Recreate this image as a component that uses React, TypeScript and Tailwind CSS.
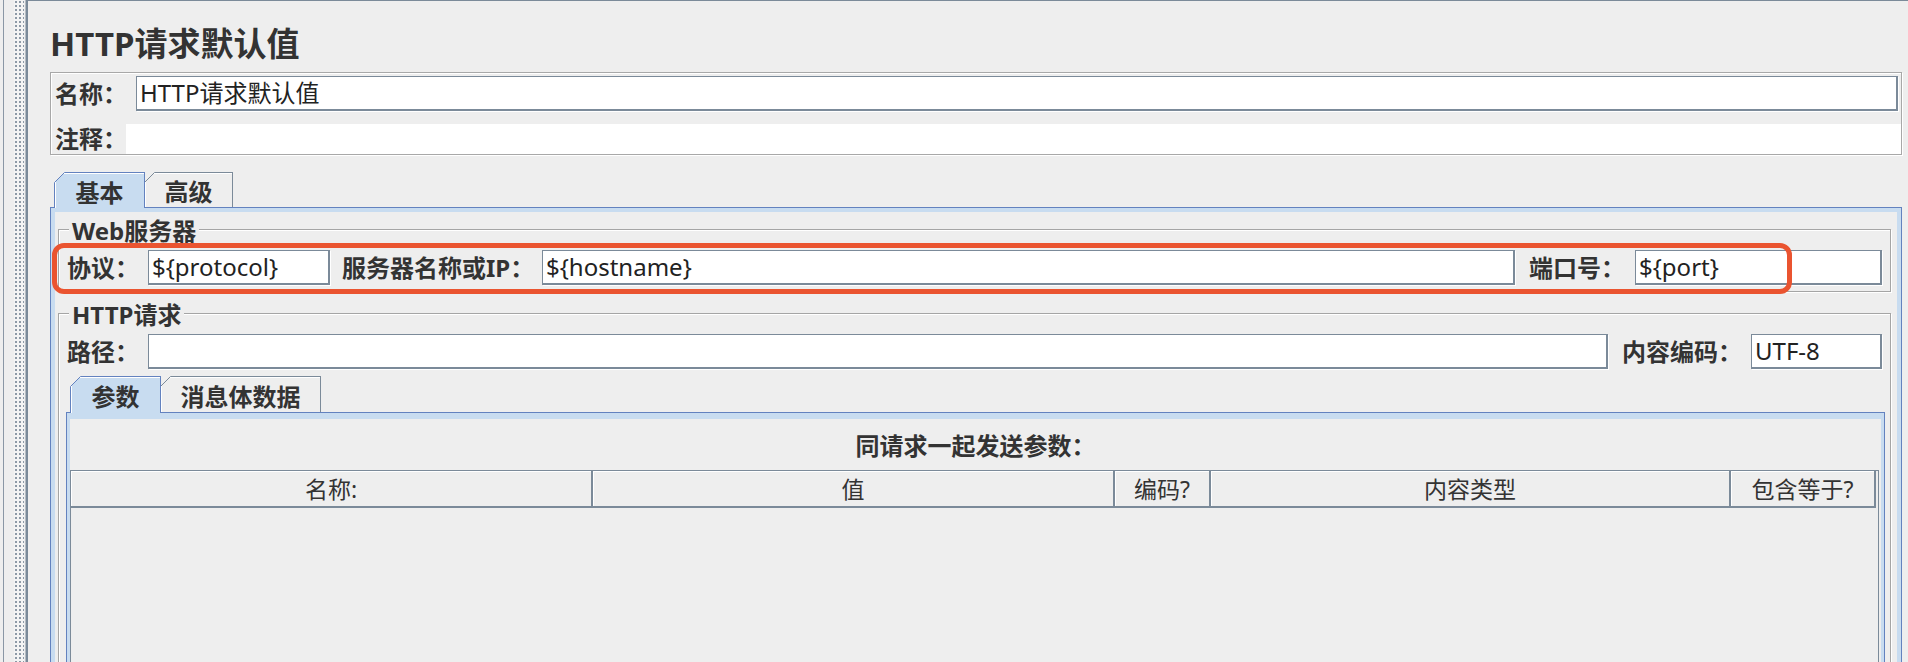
import type { ReactNode } from 'react';

const font = "font-['Noto_Sans','Noto_Sans_CJK_SC',sans-serif]";

function Label({ children, className = '' }: { children: ReactNode; className?: string }) {
  return (
    <span
      className={`shrink-0 text-[24px] leading-none font-bold whitespace-nowrap text-[#333333] ${className}`}
    >
      {children}
    </span>
  );
}

function Field({ value = '', className = '' }: { value?: string; className?: string }) {
  return (
    <div
      className={`flex h-[35px] items-center overflow-hidden border-t border-r-2 border-b-2 border-l border-[#7b8a99] bg-white pl-[3px] text-[24px] leading-none whitespace-nowrap text-[#222222] shadow-[1px_1px_0_#ffffff] ${className}`}
    >
      {value}
    </div>
  );
}

function Tab({
  label,
  selected = false,
  className = '',
}: {
  label: string;
  selected?: boolean;
  className?: string;
}) {
  const stroke = selected ? '#6382bf' : '#7b8a99';
  return (
    <div
      className={`relative flex items-center justify-center border-t border-r border-l pt-[4px] text-[24px] leading-none font-bold whitespace-nowrap text-[#333333] ${
        selected
          ? 'z-10 border-[#6382bf] bg-[#c8dcf0] shadow-[inset_1px_1px_0_#ffffff]'
          : '-ml-px self-start border-[#7b8a99] bg-[#eeeeee] shadow-[inset_1px_1px_0_#ffffff]'
      } ${className}`}
    >
      {/* chamfered top-left corner */}
      <svg className="absolute -top-px -left-px" width="11" height="11">
        <polygon points="0,0 11,0 0,11" fill="#eeeeee" />
        <line x1="0.5" y1="10.5" x2="10.5" y2="0.5" stroke={stroke} strokeWidth="1" />
      </svg>
      {label}
    </div>
  );
}

function Group({
  title,
  className = '',
  children,
}: {
  title: string;
  className?: string;
  children: ReactNode;
}) {
  return (
    <div
      className={`relative border border-[#a5a5a5] shadow-[inset_1px_1px_0_#ffffff,1px_1px_0_#ffffff] ${className}`}
    >
      <span className="absolute -top-[13px] left-[10px] bg-[#eeeeee] px-[3px] text-[24px] leading-[28px] font-bold whitespace-nowrap text-[#333333]">
        {title}
      </span>
      {children}
    </div>
  );
}

const headers = ['名称:', '值', '编码?', '内容类型', '包含等于?'];

export default function App() {
  return (
    <div className={`flex h-[662px] w-[1908px] overflow-hidden bg-[#eeeeee] ${font}`}>
      {/* splitter strip */}
      <div className="flex h-full w-[28px] shrink-0 border-r-2 border-[#7b8a99]">
        <div className="ml-[3px] h-full w-px bg-[#8a97a5]" />
        <div className="ml-[10px] h-full w-[10px] bg-[#f4f4f4] bg-[radial-gradient(circle,#8d99a6_0.9px,transparent_1.2px)] bg-[length:4px_4px]" />
        <div className="ml-[1px] h-full w-px bg-[#b4bcc4]" />
      </div>

      {/* main panel */}
      <div className="flex min-w-0 flex-1 flex-col self-start border-t border-[#7b8a99] pr-[6px] pl-[22px]">
        <div className="mt-[22px] flex h-[40px] items-center text-[33px] leading-none font-bold text-[#333333]">
          HTTP请求默认值
        </div>

        {/* name / comment */}
        <div className="mt-[9px] flex flex-col border border-[#a8a8a8] pt-[3px] shadow-[inset_1px_1px_0_#ffffff,1px_1px_0_#ffffff]">
          <div className="flex h-[35px] items-center pr-[3px] pl-[4px]">
            <Label className="w-[81px]">名称：</Label>
            <Field value="HTTP请求默认值" className="flex-1" />
          </div>
          <div className="mt-[13px] flex h-[30px] items-center pl-[4px]">
            <Label className="w-[71px]">注释：</Label>
            <div className="h-full flex-1 bg-white" />
          </div>
        </div>

        {/* outer tabs */}
        <div className="mt-[17px] flex h-[35px] pl-[4px]">
          <Tab selected label="基本" className="h-[36px] w-[91px]" />
          <Tab label="高级" className="h-[35px] w-[89px]" />
        </div>
        <div className="flex flex-col border border-[#6382bf] bg-[#c8dcf0] px-[4px] pt-[4px] pb-[4px]">
          <div className="flex flex-col bg-[#eeeeee] pr-[6px] pb-[8px] pl-[3px]">
            <Group title="Web服务器" className="mt-[17px] px-[8px] pt-[20px] pb-[6px]">
              <div className="flex h-[35px] items-center">
                <Label className="w-[81px]">协议：</Label>
                <Field value="${protocol}" className="w-[182px]" />
                <Label className="ml-[12px] w-[200px]">服务器名称或IP：</Label>
                <Field value="${hostname}" className="flex-1" />
                <Label className="ml-[14px] w-[106px]">端口号：</Label>
                <Field value="${port}" className="w-[247px]" />
              </div>
              {/* highlight box */}
              <div className="pointer-events-none absolute top-[13px] left-[-7px] h-[51px] w-[1740px] rounded-[12px] border-[5px] border-[#ea5430]" />
            </Group>

            <Group title="HTTP请求" className="mt-[21px] flex flex-col pt-[20px] pb-[8px]">
              <div className="flex h-[35px] items-center px-[8px]">
                <Label className="w-[81px]">路径：</Label>
                <Field className="flex-1" />
                <Label className="ml-[14px] w-[129px]">内容编码：</Label>
                <Field value="UTF-8" className="w-[131px]" />
              </div>

              {/* inner tabs */}
              <div className="mt-[7px] mr-[5px] ml-[7px] flex flex-col">
                <div className="flex h-[36px] pl-[4px]">
                  <Tab selected label="参数" className="h-[37px] w-[91px]" />
                  <Tab label="消息体数据" className="h-[36px] w-[161px]" />
                </div>
                <div className="flex flex-col border border-[#6382bf] bg-[#c8dcf0] px-[3px] pt-[6px] pb-[3px]">
                  <div className="flex flex-col bg-[#eeeeee]">
                    <div className="flex h-[51px] items-center justify-center pt-[3px] text-[24px] leading-none font-bold text-[#333333]">
                      同请求一起发送参数：
                    </div>
                    <div className="mr-[2px] flex h-[320px] flex-col border border-[#7b8a99]">
                      <div className="grid h-[37px] grid-cols-[522px_522px_96px_520px_145px]">
                        {headers.map((h) => (
                          <div
                            key={h}
                            className="flex items-center justify-center border-r-2 border-b-2 border-[#7b8a99] pt-[2px] text-[23px] leading-none text-[#333333] shadow-[inset_1px_1px_0_#ffffff]"
                          >
                            {h}
                          </div>
                        ))}
                      </div>
                    </div>
                  </div>
                </div>
              </div>
            </Group>
          </div>
        </div>
      </div>
    </div>
  );
}
